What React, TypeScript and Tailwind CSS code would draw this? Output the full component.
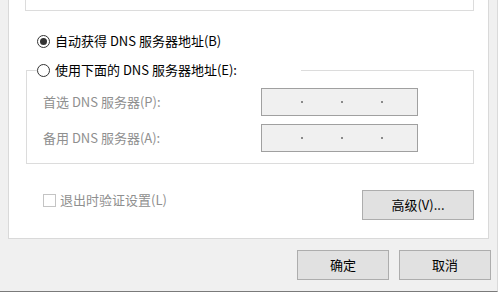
import React from "react";

const Radio = ({ checked }: { checked?: boolean }) => (
  <span className="flex h-[13px] w-[13px] shrink-0 items-center justify-center rounded-full border border-[#333333] bg-white">
    {checked && <span className="h-[7px] w-[7px] rounded-full bg-[#333333]" />}
  </span>
);

const IpBox = () => (
  <div className="flex h-[28px] w-[157px] items-center border border-[#a0a0a0] bg-[#f0f0f0] px-px">
    {[0, 1, 2].map((i) => (
      <React.Fragment key={i}>
        <span className="w-[38px]" />
        <span className="h-[2px] w-[2px] bg-[#8a8a8a]" />
      </React.Fragment>
    ))}
  </div>
);

const Button = ({ label, className }: { label: string; className?: string }) => (
  <button
    className={`flex h-[30px] items-center justify-center border border-[#adadad] bg-[#e1e1e1] text-black ${className ?? ""}`}
  >
    {label}
  </button>
);

export default function App() {
  return (
    <div className="h-[308px] w-[500px] bg-white font-['Noto_Sans_CJK_SC','Noto_Sans',sans-serif] text-[13px] leading-[18px] text-black">
      <div className="h-[292px] w-[498px] border-b border-r border-b-[#7a7a7a] border-r-[#dadada] bg-[#f0f0f0]">
        {/* tab page */}
        <div className="ml-[8px] h-[239px] w-[481px] border-x border-b border-[#d9d9d9] bg-white pl-[16px] pr-[14px]">
          <div className="h-[11px] border-x border-b border-[#dcdcdc]" />

          <div className="ml-[12px] mt-[21px] flex h-[18px] items-center gap-[5px]">
            <Radio checked />
            <span>自动获得 DNS 服务器地址(B)</span>
          </div>

          <fieldset className="ml-px mt-[11px] w-[448px] border border-[#dcdcdc]">
            <legend className="ml-[10px] pr-[64px]">
              <span className="flex h-[18px] items-center gap-[5px]">
                <Radio />
                <span>使用下面的 DNS 服务器地址(E):</span>
              </span>
            </legend>
            <div className="flex flex-col gap-[8px] pb-[11px] pl-[16px] pt-[9px] text-[#8f8f8f]">
              <div className="flex items-center">
                <span className="w-[218px]">首选 DNS 服务器(P):</span>
                <IpBox />
              </div>
              <div className="flex items-center">
                <span className="w-[218px]">备用 DNS 服务器(A):</span>
                <IpBox />
              </div>
            </div>
          </fieldset>

          <div className="mt-[26px] flex items-start justify-between">
            <div className="ml-[18px] mt-px flex h-[18px] items-center gap-[4px] text-[#8f8f8f]">
              <span className="h-[13px] w-[13px] border border-[#c4c4c4] bg-white" />
              <span>退出时验证设置(L)</span>
            </div>
            <Button label="高级(V)..." className="w-[112px]" />
          </div>
        </div>

        <div className="mt-[11px] flex justify-end gap-[10px] pr-[6px]">
          <Button label="确定" className="w-[92px]" />
          <Button label="取消" className="w-[92px]" />
        </div>
      </div>
    </div>
  );
}
